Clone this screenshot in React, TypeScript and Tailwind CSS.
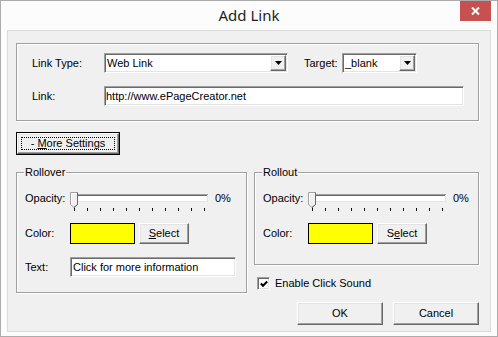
import React from "react";

const sunken =
  "border border-t-[#a0a0a0] border-l-[#a0a0a0] border-b-white border-r-white shadow-[inset_1px_1px_0_#696969,inset_-1px_-1px_0_#e3e3e3]";
const raised =
  "border border-t-white border-l-white border-b-[#696969] border-r-[#696969] shadow-[inset_-1px_-1px_0_#a0a0a0,inset_1px_1px_0_#e3e3e3] bg-[#f0f0f0]";
const etched =
  "border border-[#a0a0a0] shadow-[inset_1px_1px_0_#ffffff,1px_1px_0_#ffffff]";

function Arrow() {
  return (
    <svg width="7" height="4" viewBox="0 0 7 4">
      <polygon points="0,0 7,0 3.5,4" fill="#000" />
    </svg>
  );
}

function Combo({ text, width }: { text: string; width: string }) {
  return (
    <div className={`${sunken} ${width} h-[20px] bg-white flex items-center`}>
      <span className="flex-1 pl-[2px] whitespace-nowrap">{text}</span>
      <div className={`${raised} w-[16px] h-[16px] mr-[1px] flex items-center justify-center`}>
        <Arrow />
      </div>
    </div>
  );
}

function Slider() {
  const ticks = Array.from({ length: 11 }, (_, i) => 4 + 13 * i);
  return (
    <svg width="139" height="22" viewBox="0 0 139 22" className="block">
      <rect x="5" y="4" width="133" height="8" fill="#ffffff" />
      <line x1="5" y1="4.5" x2="138" y2="4.5" stroke="#a0a0a0" />
      <line x1="6" y1="5.5" x2="137" y2="5.5" stroke="#696969" />
      <line x1="5.5" y1="4" x2="5.5" y2="12" stroke="#a0a0a0" />
      <line x1="5" y1="11.5" x2="138" y2="11.5" stroke="#e3e3e3" />
      <line x1="137.5" y1="5" x2="137.5" y2="12" stroke="#e3e3e3" />
      {ticks.map((x, i) => (
        <line
          key={x}
          x1={x + 0.5}
          y1={i === 0 ? 16 : 18}
          x2={x + 0.5}
          y2={21}
          stroke="#000"
        />
      ))}
      <polygon points="0.5,2.5 7.5,2.5 7.5,14.5 4,17.5 0.5,14.5" fill="#f0f0f0" stroke="#a0a0a0" />
      <polyline points="1.5,14 1.5,3.5 6.5,3.5" fill="none" stroke="#ffffff" />
      <polyline points="7.5,2.5 7.5,14.5 4,17.5" fill="none" stroke="#696969" />
    </svg>
  );
}

function Group({
  caption,
  className,
  children,
}: {
  caption: string;
  className: string;
  children: React.ReactNode;
}) {
  return (
    <div className={`relative ${etched} ${className}`}>
      <span className="absolute -top-[7px] left-[7px] px-[1px] bg-[#f0f0f0] leading-[13px]">
        {caption}
      </span>
      {children}
    </div>
  );
}

function OpacityRow() {
  return (
    <div className="flex mt-[17px] h-[22px]">
      <span className="w-[45px] leading-[16px]">Opacity:</span>
      <Slider />
      <span className="ml-[6px] leading-[16px]">0%</span>
    </div>
  );
}

function ColorRow({ sel }: { sel: React.ReactNode }) {
  return (
    <div className="flex items-center mt-[11px] h-[21px]">
      <span className="w-[45px]">Color:</span>
      <div className="w-[65px] h-[21px] bg-[#ffff00] border border-black" />
      <div className={`${raised} ml-[4px] w-[50px] h-[21px] flex items-center justify-center`}>
        {sel}
      </div>
    </div>
  );
}

export default function App() {
  return (
    <div className="w-[498px] h-[337px] border border-[#acacac] bg-[#fcfcfc] font-['Liberation_Sans',Arial,sans-serif] text-[11px] text-black leading-[13px]">
      <div className="relative h-[29px] flex items-center justify-center">
        <span className="font-['Noto_Sans',sans-serif] text-[15px] text-[#1e1e1e] leading-none">
          Add Link
        </span>
        <div className="absolute right-[6px] top-0 w-[31px] h-[20px] bg-[#c75050] flex items-center justify-center">
          <svg width="9" height="8" viewBox="0 0 9 8">
            <line x1="1" y1="0.5" x2="8" y2="7.5" stroke="#fff" strokeWidth="2" />
            <line x1="8" y1="0.5" x2="1" y2="7.5" stroke="#fff" strokeWidth="2" />
          </svg>
        </div>
      </div>

      <div className="ml-[6px] w-[484px] h-[302px] border border-[#dadada] bg-[#f0f0f0] pt-[12px] pl-[8px]">
        <div className={`${etched} w-[463px] h-[78px] pt-[9px] pl-[15px]`}>
          <div className="flex items-center h-[20px]">
            <span className="w-[72px]">Link Type:</span>
            <Combo text="Web Link" width="w-[184px]" />
            <span className="ml-[16px] w-[38px]">Target:</span>
            <Combo text="_blank" width="w-[75px]" />
          </div>
          <div className="flex items-center h-[20px] mt-[13px]">
            <span className="w-[72px]">Link:</span>
            <div className={`${sunken} w-[360px] h-[20px] bg-white flex items-center pl-[1px]`}>
              http://www.ePageCreator.net
            </div>
          </div>
        </div>

        <div className="mt-[11px] w-[104px] h-[23px] border border-black">
          <div className={`${raised} relative w-full h-full flex items-center justify-center`}>
            <span className="absolute inset-[3px] border border-dotted border-black" />
            <span>
              - <u className="underline-offset-[1px]">M</u>ore Settings
            </span>
          </div>
        </div>

        <div className="flex gap-[7px] mt-[17px]">
          <Group caption="Rollover" className="w-[231px] h-[121px] pl-[8px]">
            <OpacityRow />
            <ColorRow
              sel={
                <span>
                  <u className="underline-offset-[1px]">S</u>elect
                </span>
              }
            />
            <div className="flex items-center mt-[13px] h-[20px]">
              <span className="w-[45px]">Text:</span>
              <div className={`${sunken} w-[166px] h-[20px] bg-white flex items-center pl-[2px]`}>
                Click for more information
              </div>
            </div>
          </Group>

          <div className="w-[225px]">
            <Group caption="Rollout" className="w-[225px] h-[93px] pl-[8px]">
              <OpacityRow />
              <ColorRow
                sel={
                  <span>
                    S<u className="underline-offset-[1px]">e</u>lect
                  </span>
                }
              />
            </Group>
            <div className="flex items-center mt-[12px] h-[13px] pl-[3px]">
              <div className={`${sunken} w-[13px] h-[13px] bg-white flex items-center justify-center`}>
                <svg width="8" height="8" viewBox="0 0 8 8">
                  <polyline points="0.8,3.5 3,5.8 7.2,1.5" fill="none" stroke="#000" strokeWidth="2" />
                </svg>
              </div>
              <span className="ml-[5px]">Enable Click Sound</span>
            </div>
            <div className="flex justify-end gap-[10px] mt-[12px]">
              <div className={`${raised} w-[86px] h-[23px] flex items-center justify-center`}>OK</div>
              <div className={`${raised} w-[86px] h-[23px] flex items-center justify-center`}>Cancel</div>
            </div>
          </div>
        </div>
      </div>
    </div>
  );
}
